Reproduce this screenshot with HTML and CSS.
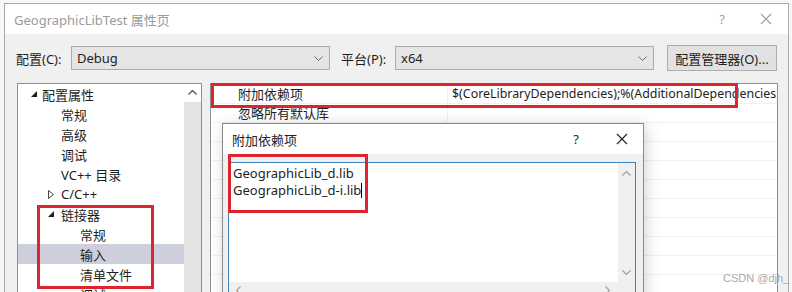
FILE: index.html
```html
<!DOCTYPE html>
<html lang="zh-CN">
<head>
  <meta charset="UTF-8">
  <title>GeographicLibTest 属性页</title>
  <link rel="stylesheet" href="styles.css">
</head>
<body>
  <div class="window">
    <div class="titlebar">
      <span class="title">GeographicLibTest 属性页</span>
      <span class="help">?</span>
      <svg class="close" width="12" height="12" viewBox="0 0 12 12"><path d="M1 1L11 11M11 1L1 11" stroke="#9a9a9a" stroke-width="1.1" fill="none"/></svg>
    </div>

    <div class="config-row">
      <label class="cfg-label">配置(C):</label>
      <div class="combo">
        <span>Debug</span>
        <svg width="9" height="5" viewBox="0 0 9 5"><path d="M0.5 0.5L4.5 4.5L8.5 0.5" stroke="#6a6a6a" fill="none"/></svg>
      </div>
      <label class="cfg-label plat">平台(P):</label>
      <div class="combo">
        <span>x64</span>
        <svg width="9" height="5" viewBox="0 0 9 5"><path d="M0.5 0.5L4.5 4.5L8.5 0.5" stroke="#6a6a6a" fill="none"/></svg>
      </div>
      <button class="btn">配置管理器(O)...</button>
    </div>

    <div class="main">
      <div class="tree">
        <div class="tree-list">
          <div class="row lvl0"><svg class="twisty" width="6" height="6" viewBox="0 0 6 6"><polygon points="6,0 6,6 0,6" fill="#1e1e1e"/></svg>配置属性</div>
          <div class="row lvl1n">常规</div>
          <div class="row lvl1n">高级</div>
          <div class="row lvl1n">调试</div>
          <div class="row lvl1n">VC++ 目录</div>
          <div class="row lvl1"><svg class="twisty" width="6" height="9" viewBox="0 0 6 9"><polygon points="0.5,0.5 5.5,4.5 0.5,8.5" fill="none" stroke="#444"/></svg>C/C++</div>
          <div class="row lvl1"><svg class="twisty" width="6" height="6" viewBox="0 0 6 6"><polygon points="6,0 6,6 0,6" fill="#1e1e1e"/></svg>链接器</div>
          <div class="row lvl2">常规</div>
          <div class="row lvl2 selected">输入</div>
          <div class="row lvl2">清单文件</div>
          <div class="row lvl2">调试</div>
          <div class="mark mark-tree"></div>
        </div>
        <div class="vscroll">
          <svg class="arrow-up" width="9" height="5" viewBox="0 0 9 5"><path d="M0.5 4.5L4.5 0.5L8.5 4.5" stroke="#505050" fill="none" stroke-width="1.3"/></svg>
          <div class="thumb"></div>
        </div>
      </div>

      <div class="grid">
        <div class="grid-row">
          <span class="name">附加依赖项</span>
          <span class="value">$(CoreLibraryDependencies);%(AdditionalDependencies)</span>
        </div>
        <div class="grid-row">
          <span class="name">忽略所有默认库</span>
          <span class="value"></span>
        </div>
        <div class="grid-row"><span class="name"></span><span class="value"></span></div>
        <div class="grid-row"><span class="name"></span><span class="value"></span></div>
        <div class="grid-row"><span class="name"></span><span class="value"></span></div>
        <div class="grid-row"><span class="name"></span><span class="value"></span></div>
        <div class="grid-row"><span class="name"></span><span class="value"></span></div>
        <div class="grid-row"><span class="name"></span><span class="value"></span></div>
        <div class="grid-row"><span class="name"></span><span class="value"></span></div>
        <div class="grid-row"><span class="name"></span><span class="value"></span></div>
        <div class="mark mark-grid"></div>

        <div class="subdialog">
          <div class="sub-title">
            <span class="title">附加依赖项</span>
            <span class="help">?</span>
            <svg class="close" width="12" height="12" viewBox="0 0 12 12"><path d="M1 1L11 11M11 1L1 11" stroke="#1e1e1e" stroke-width="1.1" fill="none"/></svg>
          </div>
          <div class="sub-body">
            <div class="editbox">
              <div class="edit-text">
                <div>GeographicLib_d.lib</div>
                <div>GeographicLib_d-i.lib<span class="caret"></span></div>
              </div>
              <div class="edit-vscroll">
                <svg width="9" height="5" viewBox="0 0 9 5"><path d="M0.5 4.5L4.5 0.5L8.5 4.5" stroke="#a0a0a0" fill="none" stroke-width="1.2"/></svg>
                <svg width="9" height="5" viewBox="0 0 9 5"><path d="M0.5 0.5L4.5 4.5L8.5 0.5" stroke="#a0a0a0" fill="none" stroke-width="1.2"/></svg>
              </div>
              <div class="edit-hscroll">
                <svg width="5" height="9" viewBox="0 0 5 9"><path d="M4.5 0.5L0.5 4.5L4.5 8.5" stroke="#a0a0a0" fill="none" stroke-width="1.2"/></svg>
                <svg width="5" height="9" viewBox="0 0 5 9"><path d="M0.5 0.5L4.5 4.5L0.5 8.5" stroke="#a0a0a0" fill="none" stroke-width="1.2"/></svg>
              </div>
              <div class="edit-corner"></div>
            </div>
          </div>
          <div class="mark mark-text"></div>
        </div>
      </div>
    </div>
  </div>

  <div class="watermark">CSDN @djh_</div>
</body>
</html>
```

FILE: styles.css
```css
* {
  box-sizing: border-box;
  margin: 0;
  padding: 0;
}

body {
  font-family: "Noto Sans", "Noto Sans CJK SC", sans-serif;
  font-size: 12.5px;
  color: #1e1e1e;
  background: #f7f7f7;
  width: 792px;
  height: 292px;
  overflow: hidden;
  padding: 3px 0 0 4px;
  position: relative;
}

.window {
  width: 785px;
  height: 320px;
  border: 1px solid #a9a9a9;
  background: #f0f0f0;
}

.titlebar {
  height: 30px;
  background: #ffffff;
  display: flex;
  align-items: center;
  padding-left: 9px;
}

.titlebar .title {
  color: #9a9a9a;
  font-size: 13px;
  flex: 1;
}

.titlebar .help {
  color: #a0a0a0;
  font-size: 13px;
  margin-right: 35px;
}

.titlebar .close {
  margin-right: 16px;
}

/* config / platform row */
.config-row {
  display: flex;
  align-items: center;
  padding: 11px 0 0 11px;
  height: 37px;
}

.cfg-label {
  width: 55px;
  font-size: 13px;
}

.cfg-label.plat {
  width: 54px;
  margin-left: 11px;
}

.combo {
  width: 259px;
  height: 24px;
  background: #e5e5e5;
  border: 1px solid #acacac;
  display: flex;
  align-items: center;
  justify-content: space-between;
  padding: 0 6px 0 5px;
  font-size: 13px;
}

.btn {
  margin-left: 13px;
  width: 110px;
  height: 26px;
  background: #e1e1e1;
  border: 1px solid #adadad;
  font-family: inherit;
  font-size: 13px;
  color: #1e1e1e;
}

/* tree + grid */
.main {
  display: flex;
  padding-left: 12px;
  margin-top: 12px;
  gap: 8px;
}

.tree {
  width: 185px;
  height: 240px;
  background: #ffffff;
  border: 1px solid #8c8f95;
  display: flex;
}

.tree-list {
  flex: 1;
  position: relative;
}

.row {
  height: 20px;
  display: flex;
  align-items: center;
  white-space: nowrap;
  font-size: 13px;
}

.row.lvl0 { padding-left: 13px; }
.row.lvl1 { padding-left: 30px; }
.row.lvl1n { padding-left: 43px; }
.row.lvl2 { padding-left: 62px; }

.row.lvl0 .twisty { margin-right: 5px; }
.row.lvl1 .twisty { margin-right: 7px; }

.row.selected {
  background: #cdd0dc;
}

.vscroll {
  width: 17px;
  display: flex;
  flex-direction: column;
  align-items: center;
}

.arrow-up {
  margin: 6px 0 7px;
}

.vscroll .thumb {
  flex: 1;
  width: 100%;
  background: #e4e4e4;
}

.grid {
  width: 568px;
  height: 240px;
  background: #ffffff;
  border: 1px solid #8c8f95;
  padding-top: 1px;
  position: relative;
}

.grid-row {
  height: 19px;
  display: flex;
  border-bottom: 1px solid #f1f1f1;
  white-space: nowrap;
  overflow: hidden;
}

.grid-row .name {
  flex-shrink: 0;
  width: 237px;
  padding-left: 27px;
  line-height: 18px;
  border-right: 1px solid #f1f1f1;
  font-size: 13px;
}

.grid-row .value {
  padding-left: 4px;
  line-height: 18px;
  font-size: 12.4px;
}

/* "附加依赖项" edit dialog */
.subdialog {
  position: absolute;
  left: 11px;
  top: 39px;
  width: 422px;
  height: 200px;
  background: #f0f0f0;
  border: 1px solid #8a8a8a;
  box-shadow: 2px 2px 14px rgba(0, 0, 0, 0.18);
}

.sub-title {
  height: 30px;
  background: #ffffff;
  display: flex;
  align-items: center;
  padding-left: 9px;
}

.sub-title .title {
  flex: 1;
  font-size: 13px;
}

.sub-title .help {
  font-size: 13px;
  margin-right: 37px;
}

.sub-title .close {
  margin-right: 15px;
}

.sub-body {
  padding: 8px 7px 0 5px;
}

.editbox {
  height: 140px;
  background: #ffffff;
  border: 1px solid #3c85bd;
  display: grid;
  grid-template-columns: 1fr 17px;
  grid-template-rows: 119px 17px;
}

.edit-text {
  padding: 2px 0 0 4px;
  line-height: 17px;
  font-size: 13px;
}

.caret {
  display: inline-block;
  width: 1px;
  height: 15px;
  background: #000000;
  vertical-align: -3px;
}

.edit-vscroll {
  background: #f0f0f0;
  display: flex;
  flex-direction: column;
  align-items: center;
  justify-content: space-between;
  padding: 8px 0 7px;
}

.edit-hscroll {
  background: #f0f0f0;
  display: flex;
  align-items: center;
  justify-content: space-between;
  padding: 0 8px 0 7px;
}

.edit-corner {
  background: #f0f0f0;
}

/* red annotation boxes */
.mark {
  position: absolute;
  border: 3px solid #dd2530;
}

.mark-tree {
  left: 19px;
  top: 121px;
  width: 117px;
  height: 84px;
}

.mark-grid {
  left: 0;
  top: -1px;
  width: 527px;
  height: 25px;
}

.mark-text {
  left: 5px;
  top: 30px;
  width: 140px;
  height: 59px;
}

.watermark {
  position: absolute;
  left: 723px;
  top: 272px;
  font-family: "Liberation Sans", sans-serif;
  font-size: 11px;
  color: #a8a8a8;
}
```
